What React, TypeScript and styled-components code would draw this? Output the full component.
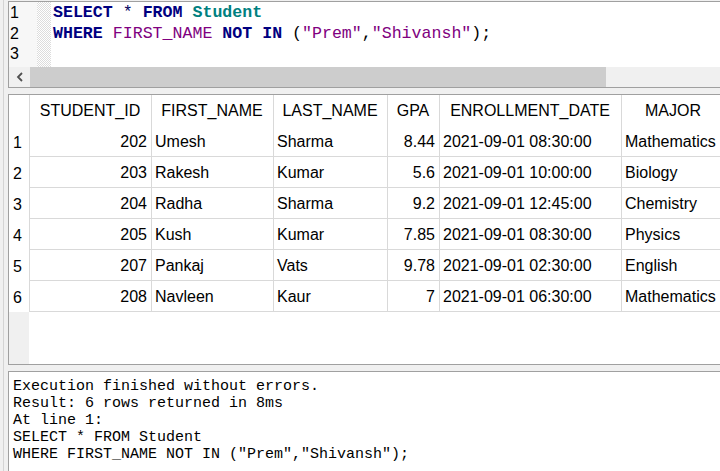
import styled, { createGlobalStyle } from "styled-components";

const GlobalStyle = createGlobalStyle`
	html, body {
		margin: 0;
		padding: 0;
		background: #f0f0f0;
		overflow: hidden;
	}
	* {
		box-sizing: border-box;
	}
`;

const LINE = "#a0a0a0";
const GRID_LINE = "#d9d9d9";
const SANS = `"Liberation Sans", Arial, sans-serif`;
const MONO = `"Liberation Mono", "Courier New", monospace`;

const Page = styled.div`
	width: 720px;
	height: 471px;
	padding: 1px 0 0 8px;
	display: flex;
	flex-direction: column;
	gap: 6px;
	background: linear-gradient(
			to right,
			transparent 3px,
			#d4d4d4 3px,
			#d4d4d4 4px,
			transparent 4px
		),
		#f0f0f0;
`;

const EditorPane = styled.div`
	border: 1px solid ${LINE};
	border-right: none;
	background: #ffffff;
	display: flex;
	flex-direction: column;
`;

const CodeArea = styled.div`
	display: flex;
	height: 65px;
`;

const LineNumbers = styled.div`
	width: 28px;
	background: #f7f7f7;
	font-family: ${SANS};
	font-size: 16px;
	line-height: 20.5px;
	color: #000;
	padding: 1px 0 0 1px;
`;

const Gutter = styled.div`
	width: 14px;
	background: repeating-conic-gradient(#dcdcdc 0 25%, #ffffff 0 50%) 0 0 / 2px
		2px;
`;

const CodeLines = styled.div`
	padding: 1px 0 0 2px;
	font-family: ${MONO};
	font-size: 16.6px;
	line-height: 20.5px;
	white-space: pre;
	color: #000;
`;

type Tone = "kw" | "table" | "ident" | "str" | "plain" | "star";

const TONES: Record<Tone, { color: string; weight: number }> = {
	kw: { color: "#000080", weight: 700 },
	table: { color: "#008080", weight: 700 },
	ident: { color: "#800080", weight: 400 },
	str: { color: "#800080", weight: 400 },
	plain: { color: "#000000", weight: 400 },
	star: { color: "#000060", weight: 400 },
};

const Tok = styled.span<{ $tone: Tone }>`
	color: ${(p) => TONES[p.$tone].color};
	font-weight: ${(p) => TONES[p.$tone].weight};
`;

const HScroll = styled.div`
	display: flex;
	height: 20px;
	background: #f0f0f0;
`;

const ScrollButton = styled.div`
	width: 21px;
	display: flex;
	align-items: center;
	justify-content: center;
	background: #f0f0f0;
`;

const ScrollThumb = styled.div`
	width: 576px;
	background: #cdcdcd;
`;

const ResultsPane = styled.div`
	height: 271px;
	border: 1px solid ${LINE};
	border-right: none;
	background: linear-gradient(to right, #f0f0f0 20px, #ffffff 20px);
	overflow: hidden;
	font-family: ${SANS};
	font-size: 16px;
	color: #000;
`;

const Row = styled.div<{ $head?: boolean }>`
	display: flex;
	height: 31px;
`;

const Cell = styled.div<{ $w: number; $align?: "left" | "right" | "center"; $head?: boolean }>`
	flex: 0 0 ${(p) => p.$w}px;
	width: ${(p) => p.$w}px;
	display: flex;
	align-items: center;
	justify-content: ${(p) =>
		p.$align === "right" ? "flex-end" : p.$align === "center" ? "center" : "flex-start"};
	padding: ${(p) => (p.$head ? "1px" : "2px")} 4px 0 3px;
	background: #ffffff;
	border-right: 1px solid ${GRID_LINE};
	border-bottom: ${(p) => (p.$head ? "none" : `1px solid ${GRID_LINE}`)};
	white-space: nowrap;
	overflow: hidden;
`;

const RowNumber = styled.div`
	flex: 0 0 21px;
	display: flex;
	align-items: center;
	padding: 2px 0 0 4px;
	background: #ffffff;
	border-right: 1px solid ${GRID_LINE};
`;

const LogPane = styled.div`
	flex: 1;
	border-top: 1px solid ${LINE};
	border-left: 1px solid ${LINE};
	background: #ffffff;
	padding: 6px 4px 0;
	font-family: ${MONO};
	font-size: 15px;
	line-height: 17px;
	white-space: pre;
	color: #000;
`;

const columns = [
	{ title: "STUDENT_ID", width: 122, align: "right" as const },
	{ title: "FIRST_NAME", width: 122, align: "left" as const },
	{ title: "LAST_NAME", width: 114, align: "left" as const },
	{ title: "GPA", width: 52, align: "right" as const },
	{ title: "ENROLLMENT_DATE", width: 182, align: "left" as const },
	{ title: "MAJOR", width: 104, align: "left" as const },
];

const rows = [
	["202", "Umesh", "Sharma", "8.44", "2021-09-01 08:30:00", "Mathematics"],
	["203", "Rakesh", "Kumar", "5.6", "2021-09-01 10:00:00", "Biology"],
	["204", "Radha", "Sharma", "9.2", "2021-09-01 12:45:00", "Chemistry"],
	["205", "Kush", "Kumar", "7.85", "2021-09-01 08:30:00", "Physics"],
	["207", "Pankaj", "Vats", "9.78", "2021-09-01 02:30:00", "English"],
	["208", "Navleen", "Kaur", "7", "2021-09-01 06:30:00", "Mathematics"],
];

const logLines = [
	"Execution finished without errors.",
	"Result: 6 rows returned in 8ms",
	"At line 1:",
	"SELECT * FROM Student",
	'WHERE FIRST_NAME NOT IN ("Prem","Shivansh");',
];

const App = (): JSX.Element => {
	return (
		<Page>
			<GlobalStyle />
			<EditorPane>
				<CodeArea>
					<LineNumbers>
						<div>1</div>
						<div>2</div>
						<div>3</div>
					</LineNumbers>
					<Gutter />
					<CodeLines>
						<div>
							<Tok $tone="kw">SELECT</Tok> <Tok $tone="star">*</Tok>{" "}
							<Tok $tone="kw">FROM</Tok> <Tok $tone="table">Student</Tok>
						</div>
						<div>
							<Tok $tone="kw">WHERE</Tok> <Tok $tone="ident">FIRST_NAME</Tok>{" "}
							<Tok $tone="kw">NOT</Tok> <Tok $tone="kw">IN</Tok>{" "}
							<Tok $tone="plain">(</Tok>
							<Tok $tone="str">"Prem"</Tok>
							<Tok $tone="plain">,</Tok>
							<Tok $tone="str">"Shivansh"</Tok>
							<Tok $tone="plain">);</Tok>
						</div>
						<div> </div>
					</CodeLines>
				</CodeArea>
				<HScroll>
					<ScrollButton>
						<svg width="8" height="10" viewBox="0 0 8 10">
							<polyline
								points="6,1 2,5 6,9"
								fill="none"
								stroke="#505050"
								strokeWidth="1.8"
							/>
						</svg>
					</ScrollButton>
					<ScrollThumb />
				</HScroll>
			</EditorPane>

			<ResultsPane>
				<Row $head>
					<RowNumber />
					{columns.map((col) => (
						<Cell key={col.title} $w={col.width} $align="center" $head>
							{col.title}
						</Cell>
					))}
				</Row>
				{rows.map((row, i) => (
					<Row key={row[0]}>
						<RowNumber>{i + 1}</RowNumber>
						{row.map((value, j) => (
							<Cell key={j} $w={columns[j].width} $align={columns[j].align}>
								{value}
							</Cell>
						))}
					</Row>
				))}
			</ResultsPane>

			<LogPane>
				{logLines.map((line) => (
					<div key={line}>{line}</div>
				))}
			</LogPane>
		</Page>
	);
};

export default App;
